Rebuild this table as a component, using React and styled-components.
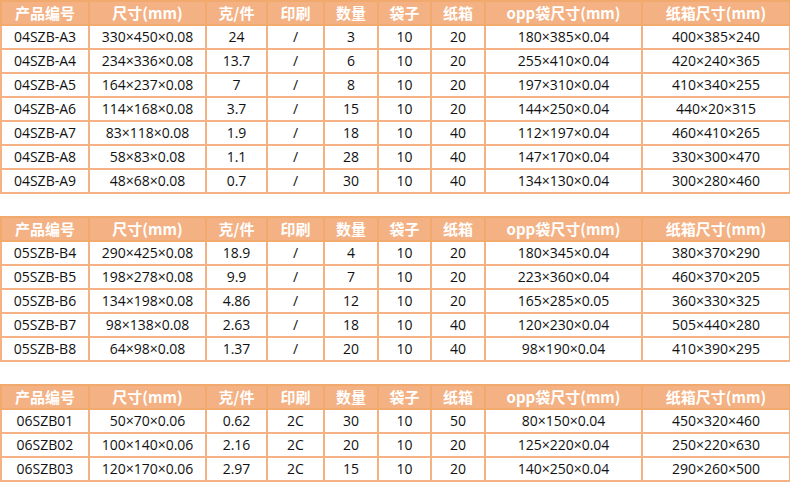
import React from "react";
import styled, { createGlobalStyle } from "styled-components";

const Global = createGlobalStyle`
  html, body { margin: 0; padding: 0; background: #fff; }
  body { font-family: "Noto Sans CJK SC", "Open Sans", sans-serif; }
`;

const Page = styled.div`
  display: flex;
  flex-direction: column;
  gap: 22px;
  width: 789px;
`;

const Table = styled.table`
  border-collapse: collapse;
  table-layout: fixed;
  width: 789px;
  font-size: 14px;
  color: #111;
`;

const Th = styled.th`
  background: #f4b183;
  color: #fff;
  font-weight: 700;
  font-size: 15px;
  height: 22px;
  padding: 0;
  border: 2px solid #f2a96e;
  text-align: center;
  line-height: 20px;
`;

const Td = styled.td`
  height: 22px;
  padding: 0;
  border: 2px solid #f4b183;
  text-align: center;
  line-height: 20px;
  font-family: "Open Sans", "Noto Sans CJK SC", sans-serif;
`;

const widths = [88, 117, 61, 57, 54, 53, 54, 157, 148];
const headers = ["产品编号", "尺寸(mm)", "克/件", "印刷", "数量", "袋子", "纸箱", "opp袋尺寸(mm)", "纸箱尺寸(mm)"];

const t1 = [
  ["04SZB-A3", "330×450×0.08", "24", "/", "3", "10", "20", "180×385×0.04", "400×385×240"],
  ["04SZB-A4", "234×336×0.08", "13.7", "/", "6", "10", "20", "255×410×0.04", "420×240×365"],
  ["04SZB-A5", "164×237×0.08", "7", "/", "8", "10", "20", "197×310×0.04", "410×340×255"],
  ["04SZB-A6", "114×168×0.08", "3.7", "/", "15", "10", "20", "144×250×0.04", "440×20×315"],
  ["04SZB-A7", "83×118×0.08", "1.9", "/", "18", "10", "40", "112×197×0.04", "460×410×265"],
  ["04SZB-A8", "58×83×0.08", "1.1", "/", "28", "10", "40", "147×170×0.04", "330×300×470"],
  ["04SZB-A9", "48×68×0.08", "0.7", "/", "30", "10", "40", "134×130×0.04", "300×280×460"],
];
const t2 = [
  ["05SZB-B4", "290×425×0.08", "18.9", "/", "4", "10", "20", "180×345×0.04", "380×370×290"],
  ["05SZB-B5", "198×278×0.08", "9.9", "/", "7", "10", "20", "223×360×0.04", "460×370×205"],
  ["05SZB-B6", "134×198×0.08", "4.86", "/", "12", "10", "20", "165×285×0.05", "360×330×325"],
  ["05SZB-B7", "98×138×0.08", "2.63", "/", "18", "10", "40", "120×230×0.04", "505×440×280"],
  ["05SZB-B8", "64×98×0.08", "1.37", "/", "20", "10", "40", "98×190×0.04", "410×390×295"],
];
const t3 = [
  ["06SZB01", "50×70×0.06", "0.62", "2C", "30", "10", "50", "80×150×0.04", "450×320×460"],
  ["06SZB02", "100×140×0.06", "2.16", "2C", "20", "10", "20", "125×220×0.04", "250×220×630"],
  ["06SZB03", "120×170×0.06", "2.97", "2C", "15", "10", "20", "140×250×0.04", "290×260×500"],
];

function SpecTable({ rows }) {
  return (
    <Table>
      <colgroup>
        {widths.map((w, i) => (
          <col key={i} style={{ width: w }} />
        ))}
      </colgroup>
      <thead>
        <tr>
          {headers.map((h) => (
            <Th key={h}>{h}</Th>
          ))}
        </tr>
      </thead>
      <tbody>
        {rows.map((r) => (
          <tr key={r[0]}>
            {r.map((c, i) => (
              <Td key={i}>{c}</Td>
            ))}
          </tr>
        ))}
      </tbody>
    </Table>
  );
}

export default function App() {
  return (
    <>
      <Global />
      <Page>
        <SpecTable rows={t1} />
        <SpecTable rows={t2} />
        <SpecTable rows={t3} />
      </Page>
    </>
  );
}
